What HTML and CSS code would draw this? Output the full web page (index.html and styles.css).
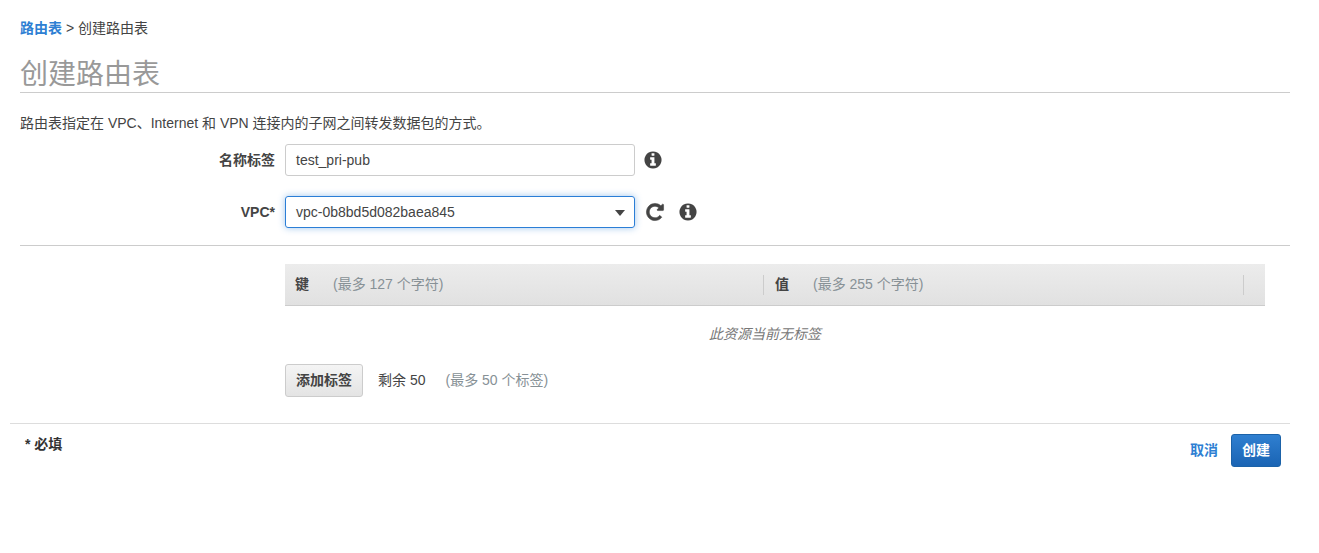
FILE: index.html
```html
<!DOCTYPE html>
<html lang="zh-CN">
<head>
    <meta charset="UTF-8">
    <title>创建路由表</title>
    <link rel="stylesheet" href="styles.css">
</head>
<body>
    <div class="page">
        <div class="breadcrumb"><a href="#">路由表</a> &gt; 创建路由表</div>
        <h1>创建路由表</h1>
        <p class="intro">路由表指定在 VPC、Internet 和 VPN 连接内的子网之间转发数据包的方式。</p>

        <div class="form-row name-row">
            <label>名称标签</label>
            <div class="field">test_pri-pub</div>
            <svg class="icon info-first" viewBox="0 0 1792 1792"><path d="M1152 1376v-160q0-14-9-23t-23-9h-96v-512q0-14-9-23t-23-9h-320q-14 0-23 9t-9 23v160q0 14 9 23t23 9h96v320h-96q-14 0-23 9t-9 23v160q0 14 9 23t23 9h448q14 0 23-9t9-23zm-128-896v-160q0-14-9-23t-23-9h-192q-14 0-23 9t-9 23v160q0 14 9 23t23 9h192q14 0 23-9t9-23zm640 416q0 209-103 385.5t-279.5 279.5-385.5 103-385.5-103-279.5-279.5-103-385.5 103-385.5 279.5-279.5 385.5-103 385.5 103 279.5 279.5 103 385.5z"/></svg>
        </div>
        <div class="form-row vpc-row">
            <label>VPC*</label>
            <div class="field select">vpc-0b8bd5d082baea845<span class="caret"></span></div>
            <svg class="icon refresh" viewBox="0 0 1792 1792"><path d="M1664 256v448q0 26-19 45t-45 19h-448q-42 0-59-40-17-39 14-69l138-138q-148-137-349-137-104 0-198.5 40.5t-163.5 109.5-109.5 163.5-40.5 198.5 40.5 198.5 109.5 163.5 163.5 109.5 198.5 40.5q119 0 225-52t179-147q7-10 23-12 15 0 25 9l137 138q9 8 9.5 20.5t-7.5 22.5q-109 132-264 204.5t-327 72.5q-156 0-298-61t-245-164-164-245-61-298 61-298 164-245 245-164 298-61q147 0 284.5 55.5t244.5 156.5l130-129q29-31 70-14 39 17 39 59z"/></svg>
            <svg class="icon info-second" viewBox="0 0 1792 1792"><path d="M1152 1376v-160q0-14-9-23t-23-9h-96v-512q0-14-9-23t-23-9h-320q-14 0-23 9t-9 23v160q0 14 9 23t23 9h96v320h-96q-14 0-23 9t-9 23v160q0 14 9 23t23 9h448q14 0 23-9t9-23zm-128-896v-160q0-14-9-23t-23-9h-192q-14 0-23 9t-9 23v160q0 14 9 23t23 9h192q14 0 23-9t9-23zm640 416q0 209-103 385.5t-279.5 279.5-385.5 103-385.5-103-279.5-279.5-103-385.5 103-385.5 279.5-279.5 385.5-103 385.5 103 279.5 279.5 103 385.5z"/></svg>
        </div>
        <hr class="divider">

        <div class="tags">
            <div class="tags-head">
                <div class="col col-key"><b>键</b><span class="hint">(最多 127 个字符)</span></div>
                <div class="col col-value"><b>值</b><span class="hint">(最多 255 个字符)</span></div>
                <div class="col col-end"></div>
            </div>
            <div class="tags-empty">此资源当前无标签</div>
            <div class="tags-foot">
                <button class="btn">添加标签</button>
                <span class="left">剩余 50</span>
                <span class="hint">(最多 50 个标签)</span>
            </div>
        </div>

        <div class="footer">
            <div class="required">* 必填</div>
            <div class="actions">
                <a href="#" class="cancel">取消</a>
                <button class="btn primary">创建</button>
            </div>
        </div>
    </div>
</body>
</html>
```

FILE: styles.css
```css
body {
    margin: 0;
    background: #fff;
    color: #444;
    font-family: "Liberation Sans", "Noto Sans CJK SC", sans-serif;
    font-size: 14px;
    line-height: 18px;
}
a {
    color: #2e7fd3;
    text-decoration: none;
    font-weight: bold;
}
.page {
    width: 1290px;
    padding-top: 19px;
}
.breadcrumb {
    margin-left: 20px;
}
h1 {
    margin: 21px 0 0 20px;
    height: 34px;
    border-bottom: 1px solid #ccc;
    color: #999;
    font-size: 28px;
    font-weight: normal;
    line-height: 34px;
}
.intro {
    margin: 21px 0 0 20px;
}
.form-row {
    display: flex;
    align-items: center;
    height: 32px;
}
.name-row {
    margin-top: 12px;
}
.vpc-row {
    margin-top: 20px;
}
label {
    width: 275px;
    text-align: right;
    font-weight: bold;
}
.field {
    position: relative;
    box-sizing: border-box;
    width: 350px;
    height: 32px;
    margin-left: 10px;
    padding: 0 10px;
    border: 1px solid #ccc;
    border-radius: 3px;
    line-height: 30px;
}
.select {
    border-color: #2b7ed6;
    box-shadow: 0 0 7px rgba(43, 126, 214, 0.45);
}
.caret {
    position: absolute;
    top: 13px;
    right: 9px;
    border-top: 6px solid #444;
    border-left: 5.5px solid transparent;
    border-right: 5.5px solid transparent;
}
.icon {
    width: 20px;
    height: 20px;
    fill: #444;
}
.refresh {
    stroke: #444;
    stroke-width: 50;
}
.info-first {
    margin-left: 8px;
}
.refresh {
    margin-left: 10px;
}
.info-second {
    margin-left: 13px;
}
.divider {
    margin: 17px 0 0 20px;
    border: 0;
    border-top: 1px solid #ccc;
}
.tags {
    margin: 18px 25px 0 285px;
}
.tags-head {
    display: flex;
    align-items: center;
    height: 41px;
    border-bottom: 1px solid #ccc;
    background: linear-gradient(#ececec, #e1e1e1);
}
.col {
    box-sizing: border-box;
    height: 20px;
    line-height: 18px;
    white-space: nowrap;
}
.col b {
    color: #444;
}
.col-key {
    width: 478px;
    padding-left: 10px;
}
.col-value {
    width: 480px;
    padding-left: 11px;
    border-left: 1px solid #ccc;
}
.col-end {
    border-left: 1px solid #ccc;
}
.col .hint {
    margin-left: 24px;
}
.hint {
    color: #879196;
}
.tags-empty {
    margin-top: 19px;
    padding-right: 20px;
    color: #777;
    font-style: italic;
    text-align: center;
}
.tags-foot {
    display: flex;
    align-items: center;
    margin-top: 21px;
}
.tags-foot span {
    margin-bottom: 2px;
}
.tags-foot .left {
    margin: 0 20px 2px 15px;
}
.btn {
    box-sizing: border-box;
    height: 33px;
    padding: 0 10px 3px;
    border: 1px solid #ccc;
    border-radius: 3px;
    background: linear-gradient(#f4f4f4, #e4e4e4);
    color: #444;
    font: bold 14px "Liberation Sans", "Noto Sans CJK SC", sans-serif;
}
.footer {
    display: flex;
    justify-content: space-between;
    margin: 26px 0 0 10px;
    border-top: 1px solid #ddd;
    padding: 10px 9px 0 15px;
}
.required {
    margin-top: 1px;
    color: #333;
    font-weight: bold;
}
.actions {
    display: flex;
    align-items: center;
    gap: 13px;
}
.cancel {
    margin-bottom: 2px;
}
.primary {
    width: 50px;
    padding: 0 0 3px;
    border-color: #1b62a8;
    background: linear-gradient(#2f7fd0, #1a64b4);
    color: #fff;
}
```
